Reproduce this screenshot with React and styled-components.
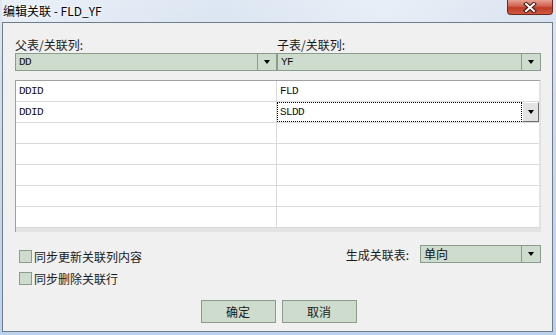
import styled, { createGlobalStyle } from "styled-components";

const GlobalStyle = createGlobalStyle`
  html, body {
    margin: 0;
    padding: 0;
    background: #f0f0f0;
    overflow: hidden;
  }
  body {
    font-family: "Noto Sans CJK SC", "Noto Sans", sans-serif;
    font-size: 12px;
    color: #1a1a1a;
  }
`;

const Window = styled.div`
  width: 556px;
  height: 335px;
  box-sizing: border-box;
  padding: 0 3px 3px 2px;
  display: flex;
  flex-direction: column;
  background: linear-gradient(180deg, #dfe8f3 0%, #cfdcec 30%, #bcd2ec 100%);
`;

const TitleBar = styled.div`
  height: 22px;
  display: flex;
  align-items: flex-start;
  justify-content: space-between;
  background: linear-gradient(90deg, rgba(255, 255, 255, 0.35) 0%, rgba(214, 226, 240, 0.2) 40%, rgba(255, 255, 255, 0.3) 70%, rgba(200, 215, 235, 0.2) 100%);
`;

const Title = styled.span`
  font-size: 12px;
  line-height: 22px;
  padding-left: 1px;
  color: #000;
  text-shadow: 0 0 4px #fff, 0 0 2px #fff;
`;

const CloseButton = styled.div`
  width: 46px;
  height: 15px;
  box-sizing: border-box;
  border: 1px solid #6e2a20;
  border-top: none;
  border-radius: 0 0 4px 4px;
  background: linear-gradient(180deg, #e8a293 0%, #d0604d 45%, #bf3b27 55%, #cf5a3f 100%);
  display: flex;
  align-items: center;
  justify-content: center;
`;

const Client = styled.div`
  flex: 1;
  background: #f0f0f0;
  border: 1px solid #6f7c8a;
  padding: 14px 11px 0 12px;
  display: flex;
  flex-direction: column;
`;

const Header = styled.div`
  display: grid;
  grid-template-columns: 262px 264px;
`;

const FieldLabel = styled.div`
  line-height: 16px;
  height: 16px;
`;

const Combo = styled.div`
  height: 18px;
  width: ${(p) => (p.$width ? `${p.$width}px` : "auto")};
  box-sizing: border-box;
  border: 1px solid #8c9c8c;
  background: #cddccd;
  display: flex;
  align-items: stretch;
`;

const ComboText = styled.div`
  flex: 1;
  padding-left: 3px;
  line-height: 16px;
  font-family: ${(p) => (p.$cjk ? `"Noto Sans CJK SC", sans-serif` : `"Liberation Mono", monospace`)};
  font-size: ${(p) => (p.$cjk ? "12px" : "11px")};
  letter-spacing: ${(p) => (p.$cjk ? "0" : "-0.6px")};
  color: #111;
`;

const ComboButton = styled.div`
  width: 18px;
  border-left: 1px solid #8c9c8c;
  display: flex;
  align-items: center;
  justify-content: center;
`;

const Arrow = styled.span`
  width: 0;
  height: 0;
  border-left: 3px solid transparent;
  border-right: 3px solid transparent;
  border-top: 4px solid #000;
`;

const Table = styled.div`
  margin-top: 9px;
  height: 152px;
  box-sizing: border-box;
  border-left: 1px solid #a0a0a0;
  border-top: 1px solid #a0a0a0;
  border-right: 2px solid #e3e3e3;
  background: #fff;
  display: flex;
  flex-direction: column;
`;

const Row = styled.div`
  display: grid;
  grid-template-columns: 260px 1fr;
  height: 21px;
  box-sizing: border-box;
  border-bottom: 1px solid #dadada;
`;

const Cell = styled.div`
  box-sizing: border-box;
  padding-left: 3px;
  line-height: 20px;
  font-family: "Liberation Mono", monospace;
  font-size: 11px;
  letter-spacing: -0.6px;
  color: #111;
  & + & {
    border-left: 1px solid #dadada;
  }
`;

const EditCell = styled.div`
  display: flex;
  border-left: 1px solid #dadada;
`;

const FocusText = styled.div`
  flex: 1;
  border: 1px dotted #000;
  padding-left: 2px;
  line-height: 18px;
  font-family: "Liberation Mono", monospace;
  font-size: 11px;
  letter-spacing: -0.6px;
  color: #111;
`;

const RaisedButton = styled.div`
  width: 17px;
  box-sizing: border-box;
  background: #e3e3e3;
  border: 1px solid;
  border-color: #fff #6f6f6f #6f6f6f #fff;
  display: flex;
  align-items: center;
  justify-content: center;
`;

const ScrollBand = styled.div`
  flex: 1;
  background: #e3e3e3;
`;

const Options = styled.div`
  display: flex;
  justify-content: space-between;
  margin-top: 13px;
`;

const Checks = styled.div`
  display: flex;
  flex-direction: column;
  gap: 9px;
  padding: 5px 0 0 4px;
`;

const CheckRow = styled.label`
  display: flex;
  align-items: center;
  height: 13px;
  line-height: 13px;
  gap: 2px;
`;

const Box = styled.span`
  width: 13px;
  height: 13px;
  box-sizing: border-box;
  border: 1px solid #8c9c8c;
  background: #cddccd;
`;

const Generate = styled.div`
  display: flex;
  align-items: flex-start;
  gap: 11px;
`;

const GenerateLabel = styled.span`
  line-height: 18px;
  margin-top: 1px;
`;

const Buttons = styled.div`
  display: flex;
  justify-content: center;
  gap: 6px;
  margin-top: 15px;
  padding-left: 1px;
`;

const Button = styled.div`
  width: 75px;
  height: 23px;
  box-sizing: border-box;
  border: 1px solid #8c9c8c;
  background: #cddccd;
  display: flex;
  align-items: center;
  justify-content: center;
  font-size: 12px;
`;

const rows = [
  ["DDID", "FLD"],
  ["DDID", "SLDD"],
  ["", ""],
  ["", ""],
  ["", ""],
  ["", ""],
  ["", ""],
];

export default function App() {
  return (
    <>
      <GlobalStyle />
      <Window>
        <TitleBar>
          <Title>编辑关联 - FLD_YF</Title>
          <CloseButton>
            <svg width="14" height="11" viewBox="0 0 14 11">
              <path d="M3 2 L11 9 M11 2 L3 9" stroke="#3a1a16" strokeWidth="4" strokeLinecap="square" />
              <path d="M3 2 L11 9 M11 2 L3 9" stroke="#fff" strokeWidth="2" strokeLinecap="square" />
            </svg>
          </CloseButton>
        </TitleBar>
        <Client>
          <Header>
            <div>
              <FieldLabel>父表/关联列:</FieldLabel>
              <Combo>
                <ComboText>DD</ComboText>
                <ComboButton>
                  <Arrow />
                </ComboButton>
              </Combo>
            </div>
            <div>
              <FieldLabel>子表/关联列:</FieldLabel>
              <Combo>
                <ComboText>YF</ComboText>
                <ComboButton>
                  <Arrow />
                </ComboButton>
              </Combo>
            </div>
          </Header>
          <Table>
            {rows.map(([left, right], i) => (
              <Row key={i}>
                <Cell>{left}</Cell>
                {i === 1 ? (
                  <EditCell>
                    <FocusText>{right}</FocusText>
                    <RaisedButton>
                      <Arrow />
                    </RaisedButton>
                  </EditCell>
                ) : (
                  <Cell>{right}</Cell>
                )}
              </Row>
            ))}
            <ScrollBand />
          </Table>
          <Options>
            <Checks>
              <CheckRow>
                <Box />
                同步更新关联列内容
              </CheckRow>
              <CheckRow>
                <Box />
                同步删除关联行
              </CheckRow>
            </Checks>
            <Generate>
              <GenerateLabel>生成关联表:</GenerateLabel>
              <Combo $width={121}>
                <ComboText $cjk>单向</ComboText>
                <ComboButton>
                  <Arrow />
                </ComboButton>
              </Combo>
            </Generate>
          </Options>
          <Buttons>
            <Button>确定</Button>
            <Button>取消</Button>
          </Buttons>
        </Client>
      </Window>
    </>
  );
}
